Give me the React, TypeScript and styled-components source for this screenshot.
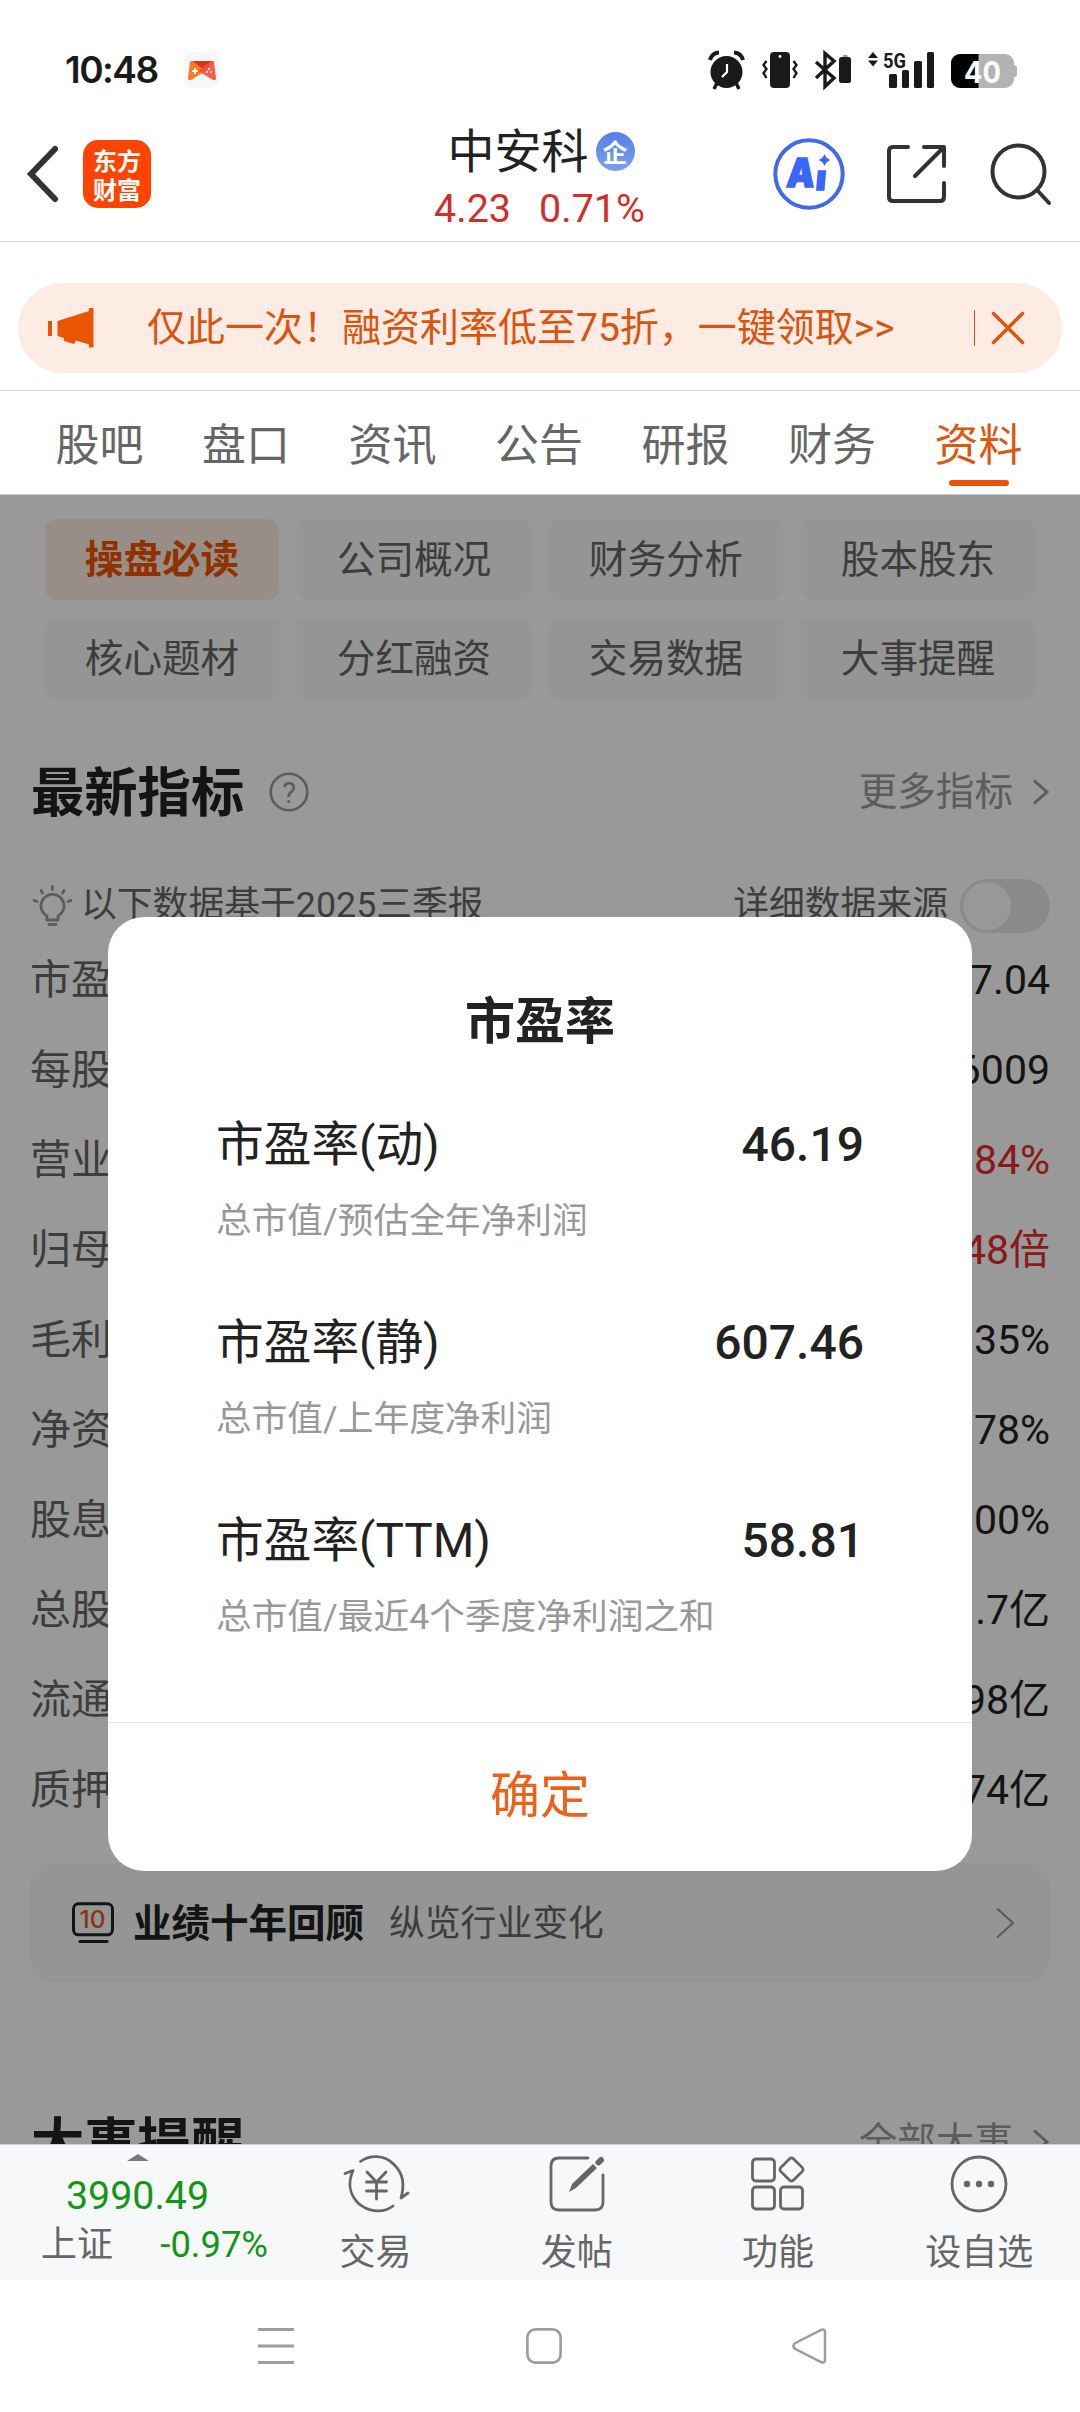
import React from "react";
import styled, { createGlobalStyle, css } from "styled-components";

const GlobalStyle = createGlobalStyle`
  * { box-sizing: border-box; }
  html, body { margin: 0; padding: 0; background: #fff; }
  body {
    font-family: Roboto, "Noto Sans CJK SC", sans-serif;
    color: #222;
    -webkit-font-smoothing: antialiased;
  }
  svg { display: block; flex: none; overflow: visible; }
`;

const Screen = styled.main`
  display: flex;
  flex-direction: column;
  width: 1080px;
  height: 2412px;
  overflow: hidden;
  background: #fff;
`;

/* ---------- status bar ---------- */

const StatusBar = styled.div`
  display: flex;
  align-items: flex-start;
  height: 100px;
  padding: 51px 63px 0 65px;
`;

const Clock = styled.span`
  width: 119px;
  font: 600 37px/38px Inter, sans-serif;
  letter-spacing: -1.5px;
  color: #1a1a1a;
`;

const StatusIcons = styled.div`
  display: flex;
  gap: 17px;
  margin-left: auto;
`;

/* ---------- header ---------- */

const Header = styled.header`
  display: grid;
  grid-template-columns: 1fr auto 1fr;
  height: 142px;
  padding: 0 29px 0 27px;
  border-bottom: 1px solid #d9d9d9;
`;

const HeaderLeft = styled.div`
  display: flex;
  align-items: center;
  gap: 25px;
  padding-top: 7px;
`;

const AppLogo = styled.div`
  display: flex;
  flex-direction: column;
  align-items: center;
  justify-content: center;
  width: 68px;
  height: 68px;
  border-radius: 15px;
  background: #ff4400;
  color: #fff;
  font: 700 24px/29px "Noto Sans CJK SC", sans-serif;
`;

const StockTitle = styled.div`
  display: flex;
  flex-direction: column;
  align-items: center;
  gap: 5px;
  padding-top: 24px;
`;

const StockName = styled.div`
  display: flex;
  align-items: center;
  gap: 7px;
  padding-left: 4px;
  font-size: 47px;
  line-height: 56px;
`;

const CompanyBadge = styled.span`
  width: 39px;
  height: 39px;
  margin-top: -2px;
  border-radius: 50%;
  background: linear-gradient(#5580e6, #7ba1ec);
  color: #fff;
  text-align: center;
  font: 700 25px/38px "Noto Sans CJK SC", sans-serif;
`;

const StockPrice = styled.div`
  display: flex;
  gap: 28px;
  padding-left: 1px;
  font-size: 39.5px;
  line-height: 48px;
  color: #d22d2d;
`;

const HeaderRight = styled.div`
  display: flex;
  align-items: center;
  justify-content: flex-end;
  padding-top: 7px;
`;

const AiButton = styled.div`
  margin-right: 42px;
`;

const ShareButton = styled.div`
  margin-right: 44px;
`;

/* ---------- banner ---------- */

const BannerArea = styled.div`
  height: 149px;
  padding: 41px 18px 0;
  border-bottom: 1px solid #d9d9d9;
`;

const Banner = styled.div`
  display: flex;
  align-items: center;
  height: 90px;
  padding: 0 37px 0 30px;
  border-radius: 45px;
  background: #fcece3;
  color: #d95410;
`;

const BannerText = styled.span`
  margin-left: 53px;
  font-size: 39px;
  line-height: 60px;
  white-space: nowrap;
`;

const BannerRule = styled.span`
  width: 1px;
  height: 36px;
  margin: 0 16px 0 auto;
  background: #d95410;
`;

/* ---------- tabs ---------- */

const Tabs = styled.nav`
  display: grid;
  grid-template-columns: repeat(7, 146.5px);
  justify-content: center;
  height: 104px;
  padding-right: 2px;
  border-bottom: 1px solid #ccc;
`;

const Tab = styled.div<{ $active?: boolean }>`
  display: flex;
  flex-direction: column;
  align-items: center;
  padding-top: 26px;
  font-size: 44px;
  line-height: 58px;
  color: ${(p) => (p.$active ? "#dc5712" : "#666")};
  ${(p) =>
    p.$active &&
    css`
      &::after {
        content: "";
        width: 60px;
        height: 6px;
        margin-top: 5px;
        border-radius: 3px;
        background: #e8550a;
      }
    `}
`;

/* ---------- content ---------- */

const Body = styled.section`
  position: relative;
  height: 1649px;
  overflow: hidden;
  background: #fff;
`;

const ChipGrid = styled.div`
  display: grid;
  grid-template-columns: repeat(4, 1fr);
  gap: 18px;
  padding: 24px 45px 0;
`;

const Chip = styled.div<{ $active?: boolean }>`
  height: 81px;
  border-radius: 12px;
  text-align: center;
  font-size: 38.6px;
  line-height: 81px;
  font-weight: ${(p) => (p.$active ? 700 : 400)};
  color: ${(p) => (p.$active ? "#f05300" : "#666")};
  background: ${(p) => (p.$active ? "#feede2" : "#f8f8f8")};
`;

const SectionHead = styled.div<{ $gap: number }>`
  display: flex;
  align-items: center;
  height: 80px;
  margin-top: ${(p) => p.$gap}px;
  padding: 0 31px;
`;

const SectionTitle = styled.h2`
  margin: 3px 25px 0 0;
  font-size: 53.3px;
  line-height: 84px;
  font-weight: 700;
  color: #222;
`;

const MoreLink = styled.span`
  display: flex;
  align-items: center;
  gap: 20px;
  margin-left: auto;
  font-size: 38.6px;
  line-height: 60px;
  color: #999;
`;

const NoteRow = styled.div`
  display: flex;
  align-items: center;
  height: 59px;
  margin-top: 44px;
  padding: 0 30px 0 32px;
  font-size: 35.8px;
  line-height: 59px;
  color: #666;
`;

const NoteText = styled.span`
  margin: 0 auto 0 8px;
`;

const Toggle = styled.span`
  width: 90px;
  height: 54px;
  margin-left: 12px;
  padding: 3px;
  border-radius: 27px;
  background: #e6e6e6;
  &::before {
    content: "";
    display: block;
    width: 48px;
    height: 48px;
    border-radius: 50%;
    background: #fefefe;
  }
`;

const MetricRow = styled.div`
  display: flex;
  justify-content: space-between;
  padding: 0 30px;
  font-size: 41px;
  line-height: 90px;
  color: #666;
`;

const MetricValue = styled.span<{ $up?: boolean }>`
  color: ${(p) => (p.$up ? "#e42c2c" : "#222")};
`;

const ReviewCard = styled.div`
  display: flex;
  align-items: center;
  height: 120px;
  margin: 28px 30px 0;
  padding: 0 35px 0 42px;
  border-radius: 24px;
  background: #f8f8f8;
`;

const ReviewTitle = styled.strong`
  margin: 2px 25px 0 18px;
  font-size: 38.5px;
  line-height: 60px;
`;

const ReviewNote = styled.span`
  margin: 2px auto 0 0;
  font-size: 35.8px;
  line-height: 60px;
  color: #666;
`;

/* ---------- modal ---------- */

const Mask = styled.div`
  position: absolute;
  inset: 0;
  display: flex;
  align-items: flex-start;
  justify-content: center;
  padding-top: 422px;
  background: rgba(0, 0, 0, 0.4);
`;

const Dialog = styled.div`
  display: flex;
  flex-direction: column;
  width: 864px;
  height: 954px;
  border-radius: 36px;
  background: #fff;
`;

const DialogTitle = styled.h3`
  margin: 75px 0 63px;
  text-align: center;
  font-size: 50px;
  line-height: 60px;
  font-weight: 700;
`;

const RatioList = styled.div`
  display: flex;
  flex-direction: column;
  gap: 67px;
  flex: 1;
  padding: 0 108px;
`;

const RatioHead = styled.div`
  display: flex;
  justify-content: space-between;
  font-size: 47.7px;
  line-height: 60px;
`;

const RatioValue = styled.span`
  font-size: 48px;
  font-weight: 500;
`;

const RatioNote = styled.div`
  margin-top: 21px;
  font-size: 35.7px;
  line-height: 50px;
  color: #999;
`;

const ConfirmButton = styled.div`
  height: 149px;
  border-top: 1px solid #e6e6e6;
  text-align: center;
  font-size: 50px;
  line-height: 147px;
  color: #f0601a;
`;

/* ---------- bottom bar ---------- */

const BottomBar = styled.footer`
  display: grid;
  grid-template-columns: 275px repeat(4, 1fr);
  height: 136px;
  border-top: 1px solid #cfd2d8;
  background: #f7f8fa;
  color: #666;
`;

const IndexCell = styled.div`
  display: flex;
  flex-direction: column;
  align-items: center;
  padding-top: 9px;
`;

const IndexPrice = styled.span`
  margin-top: 11px;
  font-size: 39.4px;
  line-height: 48px;
  color: #159615;
`;

const IndexRow = styled.div`
  display: flex;
  justify-content: space-between;
  align-self: stretch;
  padding: 0 7px 0 41px;
  font-size: 36px;
  line-height: 50px;
`;

const IndexChange = styled.span`
  font-size: 36.4px;
  color: #159615;
`;

const Action = styled.div`
  display: flex;
  flex-direction: column;
  align-items: center;
  gap: 13px;
  padding-top: 8px;
  font-size: 36px;
  line-height: 50px;
`;

const SystemNav = styled.div`
  display: flex;
  gap: 231.5px;
  height: 132px;
  padding: 48px 0 0 258px;
`;

/* ---------- icons ---------- */

const GameIcon = () => (
  <svg width="36" height="38" viewBox="0 0 36 38">
    <rect y="1" width="36" height="36" rx="9" fill="#f7f7f7" />
    <path d="M7 10h22L21 20z" fill="#d8321a" />
    <path d="M6 11q1-2 3-1l12 10-14 9q-3 1-3-2z" fill="#f97a22" />
    <path d="M30 11q-1-2-3-1L14 20l15 9q3 1 3-2z" fill="#f4503c" opacity=".9" />
    <path d="M11 17v6M8 20h6" stroke="#fff" strokeWidth="1.8" />
    <g fill="#fff">
      <circle cx="25" cy="18" r="1" />
      <circle cx="23" cy="21" r="1" />
      <circle cx="27" cy="21" r="1" />
    </g>
  </svg>
);

const AlarmIcon = () => (
  <svg width="37" height="38" viewBox="0 0 37 38">
    <circle cx="18.5" cy="21" r="16" fill="#1a1a1a" />
    <path d="M2 9Q4 2 11 1.500M35 9Q33 2 26 1.500" fill="none" stroke="#1a1a1a" strokeWidth="4" />
    <path d="M9 32l-3 6M28 32l3 6" stroke="#1a1a1a" strokeWidth="3.500" />
    <path d="M19 13v8l-5 5" fill="none" stroke="#fff" strokeWidth="2.200" />
  </svg>
);

const VibrateIcon = () => (
  <svg width="36" height="38" viewBox="0 0 36 38" fill="none" stroke="#1a1a1a" strokeWidth="2.400">
    <rect x="8" y="1" width="20" height="36" rx="4" fill="#1a1a1a" stroke="none" />
    <circle cx="18" cy="5.500" r="1.400" fill="#fff" stroke="none" />
    <path d="M4.500 10l-3 4 3 4-3 4 3 5M31.500 10l3 4-3 4 3 4-3 5" />
  </svg>
);

const BluetoothIcon = () => (
  <svg width="36" height="38" viewBox="0 0 36 38">
    <path d="M1 11l18 16-9 8.500V2.500L19 10 1 27" fill="none" stroke="#1a1a1a" strokeWidth="3.400" />
    <path d="M28 4h4.500v3H28z" fill="#999" />
    <rect x="24" y="6" width="12" height="26" rx="2.500" fill="#1a1a1a" />
  </svg>
);

const SignalIcon = () => (
  <svg width="66" height="38" viewBox="0 0 66 38" fill="#1a1a1a">
    <path d="M0 7l5-6 5 6zM0 9.500l5 6 5-6z" />
    <text x="15" y="16.500" fontSize="21" fontWeight="700" fontFamily="Roboto, sans-serif" textLength="23" lengthAdjust="spacingAndGlyphs">
      5G
    </text>
    <rect x="21" y="23" width="8" height="14" rx="1.500" />
    <rect x="34" y="19" width="7" height="18" rx="1.500" />
    <rect x="46" y="10" width="8" height="27" rx="1.500" />
    <rect x="59" y="1" width="7" height="36" rx="1.500" />
  </svg>
);

const BatteryIcon = () => (
  <svg width="66" height="38" viewBox="0 0 66 38">
    <rect y="3" width="63" height="34" rx="9" fill="#b3b3b3" />
    <path d="M63 14q3 0 3 3v6q0 3-3 3z" fill="#b3b3b3" />
    <path d="M27.500 3H9a9 9 0 0 0-9 9v16a9 9 0 0 0 9 9h18.500z" fill="#000" />
    <text x="31.500" y="31.500" textAnchor="middle" fontSize="30" fontWeight="700" fontFamily="Inter, sans-serif" fill="#fff" textLength="37" lengthAdjust="spacingAndGlyphs">
      40
    </text>
  </svg>
);

const BackIcon = () => (
  <svg width="31" height="58" viewBox="0 0 31 58" fill="none" stroke="#333" strokeWidth="6" strokeLinecap="round">
    <path d="M28 4L4 29l24 25" />
  </svg>
);

const AiIcon = () => (
  <svg width="72" height="72" viewBox="0 0 72 72" fill="#3a66fa">
    <circle cx="36" cy="36" r="33.700" fill="none" stroke="#416ae4" strokeWidth="4" />
    <g transform="skewX(-5)" fontFamily="Inter, sans-serif" fontWeight="900" stroke="#3a66fa">
      <text x="17" y="49" fontSize="40" strokeWidth="1.500" textLength="28" lengthAdjust="spacingAndGlyphs">A</text>
      <text x="46.500" y="52" fontSize="35" strokeWidth="1.500">ı</text>
    </g>
    <path d="M51.500 16q1.500 4.500 6 6-4.500 1.500-6 6-1.500-4.500-6-6 4.500-1.500 6-6z" />
  </svg>
);

const ShareIcon = () => (
  <svg width="59" height="58" viewBox="0 0 59 58" fill="none" stroke="#333" strokeWidth="4" strokeLinecap="round" strokeLinejoin="round">
    <path d="M21 2H6Q2 2 2 6v46q0 4 4 4h47q4 0 4-4V38" />
    <path d="M37 2h20v19M57 2L28 31" />
  </svg>
);

const SearchIcon = () => (
  <svg width="61" height="62" viewBox="0 0 61 62" fill="none" stroke="#333" strokeWidth="4" strokeLinecap="round">
    <circle cx="28.500" cy="28.500" r="26" />
    <path d="M47 47l12 13" />
  </svg>
);

const HornIcon = () => (
  <svg width="46" height="40" viewBox="0 0 46 40" fill="#ea5504">
    <path d="M0 13h4v15H0zM9.500 13L41 3V0h4.500v39.500H41V36.500l-13-4-2 3.500-10-3v-3l-6.500-2z" />
  </svg>
);

const CloseIcon = () => (
  <svg width="34" height="34" viewBox="0 0 34 34" stroke="#e0560e" strokeWidth="3.400" strokeLinecap="round">
    <path d="M2.500 2.500l29 29M31.500 2.500l-29 29" />
  </svg>
);

const HelpIcon = () => (
  <svg width="40" height="40" viewBox="0 0 40 40">
    <circle cx="20" cy="20" r="18.300" fill="none" stroke="#999" strokeWidth="2.600" />
    <text x="20" y="30.500" textAnchor="middle" fontSize="30" fontFamily="Roboto, sans-serif" fill="#999">
      ?
    </text>
  </svg>
);

const ChevronIcon = ({ w = 16, h = 26, stroke = 3, color = "#999" }) => (
  <svg width={w} height={h} viewBox={`0 0 ${w} ${h}`} fill="none" stroke={color} strokeWidth={stroke}>
    <path d={`M1 1.500L${w - 2} ${h / 2}L1 ${h - 1.5}`} />
  </svg>
);

const BulbIcon = () => (
  <svg width="41" height="42" viewBox="0 0 41 42" fill="none" stroke="#999" strokeWidth="2.800" strokeLinecap="round" strokeLinejoin="round">
    <path d="M15 35v-4a11.500 11.500 0 1 1 11 0v4zM17 39.500h7M20.500 1.500v3M9 5.500l1.500 2.500M32 5.500L30.500 8M2 15.500l3 1M39 15.500l-3 1" />
  </svg>
);

const TenYearsIcon = () => (
  <svg width="43" height="42" viewBox="0 0 43 42">
    <rect x="1.500" y="1.800" width="39" height="31" rx="5" fill="none" stroke="#222" strokeWidth="3" />
    <path d="M8 39.500h27" stroke="#222" strokeWidth="3.200" strokeLinecap="round" />
    <text x="7.500" y="26" fontSize="24.500" fontWeight="500" fontFamily="Inter, sans-serif" textLength="26" lengthAdjust="spacingAndGlyphs" fill="#e55a1c">
      10
    </text>
  </svg>
);

const CaretIcon = () => (
  <svg width="22" height="7" viewBox="0 0 22 7">
    <path d="M0 7L11 0l11 7z" fill="#77787b" />
  </svg>
);

const iconProps = {
  width: 66,
  height: 62,
  viewBox: "0 0 66 62",
  fill: "none",
  stroke: "#666",
  strokeWidth: 2.8,
  strokeLinecap: "round" as const,
  strokeLinejoin: "round" as const,
};

const TradeIcon = () => (
  <svg {...iconProps}>
    <path d="M17.500 8.500C26 2 41 1 51 11.500c9 9 11 19 7 33.500l7-5" />
    <path d="M50 53C41 60 26 60 15 50 6 41 5 29 10 17.500L2 20.500" />
    <path d="M24 19l9.500 10L43 19M23.500 29h20M23.500 38h20M33.500 29v17" />
  </svg>
);

const PostIcon = () => (
  <svg {...iconProps}>
    <path d="M44 5H15q-8 0-8 8v36q0 8 8 8h36q8 0 8-8V22" />
    <path d="M25 39l3-8 21-20 4 4-21 20z" fill="#666" stroke="none" />
    <path d="M54.500 9.500L57 7" strokeWidth="6" />
  </svg>
);

const FeaturesIcon = () => (
  <svg {...iconProps}>
    <rect x="7.500" y="6" width="22" height="22" rx="3.500" />
    <rect x="7.500" y="34" width="22" height="22" rx="3.500" />
    <rect x="35.500" y="34" width="22" height="22" rx="3.500" />
    <rect x="37.500" y="7.500" width="18" height="18" rx="3" transform="rotate(45 46.500 16.500)" />
  </svg>
);

const MoreIcon = () => (
  <svg {...iconProps}>
    <circle cx="33" cy="31" r="27" />
    <g fill="#666" stroke="none">
      <circle cx="21" cy="31" r="3.200" />
      <circle cx="33" cy="31" r="3.200" />
      <circle cx="45" cy="31" r="3.200" />
    </g>
  </svg>
);

const MenuKey = () => (
  <svg width="36" height="36" viewBox="0 0 36 36" stroke="#9d9d9d" strokeWidth="3">
    <path d="M0 1.500h36M0 18h36M0 34.500h36" />
  </svg>
);

const HomeKey = () => (
  <svg width="36" height="36" viewBox="0 0 36 36">
    <rect x="1.400" y="1.400" width="33.200" height="33.200" rx="8" fill="none" stroke="#9d9d9d" strokeWidth="2.600" />
  </svg>
);

const BackKey = () => (
  <svg width="35" height="36" viewBox="0 0 35 36">
    <path d="M1.500 15.500L28 2q4-1.500 4 2v28q0 3.500-4 2L1.500 20.500q-2-2.500 0-5z" fill="none" stroke="#9d9d9d" strokeWidth="2.500" />
  </svg>
);

/* ---------- data ---------- */

const tabs = ["股吧", "盘口", "资讯", "公告", "研报", "财务", "资料"];

const chips = ["操盘必读", "公司概况", "财务分析", "股本股东", "核心题材", "分红融资", "交易数据", "大事提醒"];

const metrics: { label: string; value: string; up?: boolean }[] = [
  { label: "市盈", value: "7.04" },
  { label: "每股", value: "6009" },
  { label: "营业", value: "84%", up: true },
  { label: "归母", value: "48倍", up: true },
  { label: "毛利", value: "35%" },
  { label: "净资", value: "78%" },
  { label: "股息", value: "00%" },
  { label: "总股", value: ".7亿" },
  { label: "流通", value: "98亿" },
  { label: "质押", value: "74亿" },
];

const ratios = [
  { name: "市盈率(动)", value: "46.19", note: "总市值/预估全年净利润" },
  { name: "市盈率(静)", value: "607.46", note: "总市值/上年度净利润" },
  { name: "市盈率(TTM)", value: "58.81", note: "总市值/最近4个季度净利润之和" },
];

const actions = [
  { label: "交易", icon: <TradeIcon /> },
  { label: "发帖", icon: <PostIcon /> },
  { label: "功能", icon: <FeaturesIcon /> },
  { label: "设自选", icon: <MoreIcon /> },
];

export default function App() {
  return (
    <Screen>
      <GlobalStyle />
      <StatusBar>
        <Clock>10:48</Clock>
        <GameIcon />
        <StatusIcons>
          <AlarmIcon />
          <VibrateIcon />
          <BluetoothIcon />
          <SignalIcon />
          <BatteryIcon />
        </StatusIcons>
      </StatusBar>

      <Header>
        <HeaderLeft>
          <BackIcon />
          <AppLogo>
            <span>东方</span>
            <span>财富</span>
          </AppLogo>
        </HeaderLeft>
        <StockTitle>
          <StockName>
            中安科<CompanyBadge>企</CompanyBadge>
          </StockName>
          <StockPrice>
            <span>4.23</span>
            <span>0.71%</span>
          </StockPrice>
        </StockTitle>
        <HeaderRight>
          <AiButton>
            <AiIcon />
          </AiButton>
          <ShareButton>
            <ShareIcon />
          </ShareButton>
          <SearchIcon />
        </HeaderRight>
      </Header>

      <BannerArea>
        <Banner>
          <HornIcon />
          <BannerText>仅此一次！融资利率低至75折，一键领取&gt;&gt;</BannerText>
          <BannerRule />
          <CloseIcon />
        </Banner>
      </BannerArea>

      <Tabs>
        {tabs.map((t) => (
          <Tab key={t} $active={t === "资料"}>
            {t}
          </Tab>
        ))}
      </Tabs>

      <Body>
        <ChipGrid>
          {chips.map((c, i) => (
            <Chip key={c} $active={i === 0}>
              {c}
            </Chip>
          ))}
        </ChipGrid>

        <SectionHead $gap={53}>
          <SectionTitle>最新指标</SectionTitle>
          <HelpIcon />
          <MoreLink>
            更多指标
            <ChevronIcon />
          </MoreLink>
        </SectionHead>

        <NoteRow>
          <BulbIcon />
          <NoteText>以下数据基于2025三季报</NoteText>
          <span>详细数据来源</span>
          <Toggle />
        </NoteRow>

        {metrics.map((m) => (
          <MetricRow key={m.label}>
            <span>{m.label}</span>
            <MetricValue $up={m.up}>{m.value}</MetricValue>
          </MetricRow>
        ))}

        <ReviewCard>
          <TenYearsIcon />
          <ReviewTitle>业绩十年回顾</ReviewTitle>
          <ReviewNote>纵览行业变化</ReviewNote>
          <ChevronIcon w={19} h={32} stroke={2.2} />
        </ReviewCard>

        <SectionHead $gap={119}>
          <SectionTitle>大事提醒</SectionTitle>
          <MoreLink>
            全部大事
            <ChevronIcon />
          </MoreLink>
        </SectionHead>

        <Mask>
          <Dialog>
            <DialogTitle>市盈率</DialogTitle>
            <RatioList>
              {ratios.map((r) => (
                <div key={r.name}>
                  <RatioHead>
                    <span>{r.name}</span>
                    <RatioValue>{r.value}</RatioValue>
                  </RatioHead>
                  <RatioNote>{r.note}</RatioNote>
                </div>
              ))}
            </RatioList>
            <ConfirmButton>确定</ConfirmButton>
          </Dialog>
        </Mask>
      </Body>

      <BottomBar>
        <IndexCell>
          <CaretIcon />
          <IndexPrice>3990.49</IndexPrice>
          <IndexRow>
            <span>上证</span>
            <IndexChange>-0.97%</IndexChange>
          </IndexRow>
        </IndexCell>
        {actions.map((a) => (
          <Action key={a.label}>
            {a.icon}
            {a.label}
          </Action>
        ))}
      </BottomBar>

      <SystemNav>
        <MenuKey />
        <HomeKey />
        <BackKey />
      </SystemNav>
    </Screen>
  );
}
